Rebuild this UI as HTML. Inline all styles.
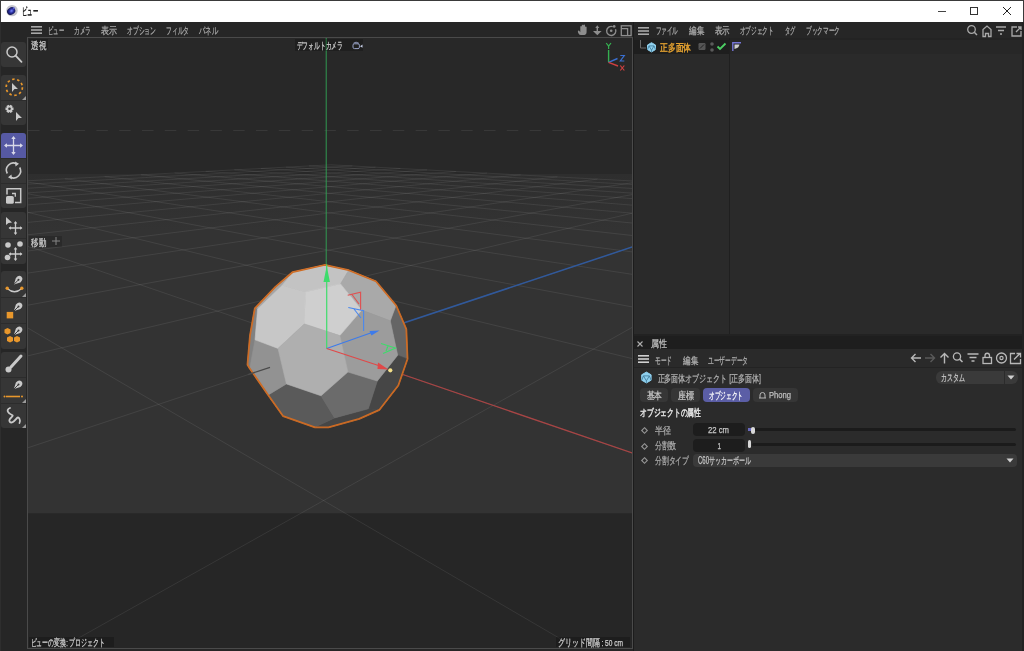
<!DOCTYPE html>
<html><head><meta charset="utf-8">
<style>
*{box-sizing:border-box}
html,body{margin:0;padding:0}
body{width:1024px;height:651px;overflow:hidden;position:relative;background:#262626;font-family:"Liberation Sans", sans-serif;color:#c8c8c8;font-size:11px}
.a{position:absolute}
svg{position:absolute;overflow:visible}
</style></head><body>

<div class="a" style="left:0px;top:0px;width:1024px;height:22px;background:#ffffff;border-top:1px solid #3a3a3a;border-left:1px solid #3a3a3a;border-right:1px solid #3a3a3a"></div>
<svg style="left:5px;top:4px" width="14" height="14" viewBox="0 0 14 14">
<defs><radialGradient id="lg" cx="0.55" cy="0.5" r="0.6"><stop offset="0" stop-color="#7a88ff"/><stop offset="0.45" stop-color="#2a30a0"/><stop offset="1" stop-color="#0c0e38"/></radialGradient></defs>
<circle cx="7" cy="6.6" r="5.7" fill="#c4c4cc"/><ellipse cx="6.2" cy="7.1" rx="4.3" ry="3.5" transform="rotate(-35 6.2 7.1)" fill="url(#lg)"/><circle cx="8.8" cy="4.3" r="1" fill="#5a60d0"/></svg>
<div class="a" style="left:938px;top:11px;width:8px;height:1px;background:#444;"></div>
<div class="a" style="left:970px;top:7px;width:8px;height:8px;background:transparent;border:1px solid #333"></div>
<svg style="left:1001px;top:5px" width="12" height="12" viewBox="0 0 12 12"><path d="M2 2L10 10M10 2L2 10" stroke="#222" stroke-width="1"/></svg>
<div class="a" style="left:0px;top:22px;width:1px;height:629px;background:#2e2e2e;"></div>
<div class="a" style="left:1px;top:22px;width:26px;height:629px;background:#262626;"></div>
<div class="a" style="left:1px;top:42px;width:25px;height:25px;background:#363636;border-radius:3px"></div>
<div class="a" style="left:1px;top:75px;width:25px;height:50px;background:#363636;border-radius:3px"></div>
<div class="a" style="left:1px;top:100px;width:25px;height:1px;background:#2c2c2c;"></div>
<div class="a" style="left:1px;top:133px;width:25px;height:75px;background:#363636;border-radius:3px"></div>
<div class="a" style="left:1px;top:158px;width:25px;height:1px;background:#2c2c2c;"></div>
<div class="a" style="left:1px;top:183px;width:25px;height:1px;background:#2c2c2c;"></div>
<div class="a" style="left:1px;top:212px;width:25px;height:52px;background:#363636;border-radius:3px"></div>
<div class="a" style="left:1px;top:238px;width:25px;height:1px;background:#2c2c2c;"></div>
<div class="a" style="left:1px;top:271px;width:25px;height:78px;background:#363636;border-radius:3px"></div>
<div class="a" style="left:1px;top:297px;width:25px;height:1px;background:#2c2c2c;"></div>
<div class="a" style="left:1px;top:323px;width:25px;height:1px;background:#2c2c2c;"></div>
<div class="a" style="left:1px;top:352px;width:25px;height:76px;background:#363636;border-radius:3px"></div>
<div class="a" style="left:1px;top:377px;width:25px;height:1px;background:#2c2c2c;"></div>
<div class="a" style="left:1px;top:403px;width:25px;height:1px;background:#2c2c2c;"></div>
<div class="a" style="left:1px;top:133px;width:25px;height:25px;background:#5659a3;border-radius:3px 3px 0 0"></div>

<svg style="left:1px;top:42px" width="25" height="25"><circle cx="11" cy="10" r="5" fill="none" stroke="#c9c9c9" stroke-width="1.5"/><path d="M14.6 13.6L20.5 19.8" stroke="#c9c9c9" stroke-width="1.8" stroke-linecap="round"/></svg>
<svg style="left:1px;top:75px" width="25" height="25"><circle cx="13.3" cy="12.3" r="8.1" fill="none" stroke="#e8972c" stroke-width="1.7" stroke-dasharray="2.5 2.6"/><path d="M11 8L17 14L13.5 14L11 17Z" fill="#c9c9c9"/><path d="M25 21L25 25L21 25Z" fill="#9a9a9a"/></svg>
<svg style="left:1px;top:100px" width="25" height="25"><path d="M12.51 7.56L12.51 10.04L10.97 10.32L11.05 10.18L11.58 11.65L9.43 12.90L8.42 11.70L8.58 11.70L7.57 12.90L5.42 11.65L5.95 10.18L6.03 10.32L4.49 10.04L4.49 7.56L6.03 7.28L5.95 7.42L5.42 5.95L7.57 4.70L8.58 5.90L8.42 5.90L9.43 4.70L11.58 5.95L11.05 7.42L10.97 7.28Z" fill="#c9c9c9"/><circle cx="8.5" cy="8.8" r="1.3" fill="#363636"/><path d="M15 12L21 18L17.5 18L15 21Z" fill="#c9c9c9"/></svg>
<svg style="left:1px;top:133px" width="25" height="25"><path d="M12.5 4V21M4 12.5H21" stroke="#d8d8e8" stroke-width="1.3"/><path d="M12.5 3L10.3 6H14.7ZM12.5 22L10.3 19H14.7ZM3 12.5L6 10.3V14.7ZM22 12.5L19 10.3V14.7Z" fill="#d8d8e8"/></svg>
<svg style="left:1px;top:158px" width="25" height="25"><path d="M6.3 15.5A7 7 0 0 1 15.5 5.8" fill="none" stroke="#c9c9c9" stroke-width="1.6"/><path d="M18.7 9.5A7 7 0 0 1 9.5 19.2" fill="none" stroke="#c9c9c9" stroke-width="1.6"/><path d="M14 3.5L18 5.8L14.5 8.5Z M11 21.5L7 19.2L10.5 16.5Z" fill="#c9c9c9"/></svg>
<svg style="left:1px;top:183px" width="25" height="25"><path d="M6 11.5V5.8H19.7V19.5H14" fill="none" stroke="#c9c9c9" stroke-width="1.5"/><rect x="5" y="13" width="7.8" height="7.8" rx="1.6" fill="#c9c9c9"/><path d="M11 10.5H14.3V13.8" fill="none" stroke="#c9c9c9" stroke-width="1.3"/></svg>
<svg style="left:1px;top:212px" width="25" height="26"><path d="M5 5L11 10.5L7.5 11L5 13Z" fill="#c9c9c9"/><path d="M14.5 10V22M8.5 16H20.5" stroke="#c9c9c9" stroke-width="1.3"/><path d="M14.5 9L12.7 11.5H16.3ZM14.5 23L12.7 20.5H16.3ZM7.5 16L10 14.2V17.8ZM21.5 16L19 14.2V17.8Z" fill="#c9c9c9"/></svg>
<svg style="left:1px;top:238px" width="25" height="26"><circle cx="7" cy="7" r="2.8" fill="#c9c9c9"/><circle cx="19" cy="6" r="2.8" fill="#c9c9c9"/><circle cx="6.5" cy="19.5" r="2.8" fill="#c9c9c9"/><path d="M14.5 10V22M8.5 16H20.5" stroke="#c9c9c9" stroke-width="1.3"/><path d="M14.5 9L12.7 11.5H16.3ZM14.5 23L12.7 20.5H16.3ZM7.5 16L10 14.2V17.8ZM21.5 16L19 14.2V17.8Z" fill="#c9c9c9"/></svg>
<svg style="left:1px;top:271px" width="25" height="26"><path d="M6.2 17.5Q13.5 24 20.8 17.5" fill="none" stroke="#c9c9c9" stroke-width="1.3"/><circle cx="6.2" cy="17.2" r="1.7" fill="#e8972c"/><circle cx="20.8" cy="17.2" r="1.7" fill="#e8972c"/><g transform="translate(17.5 8.8) rotate(45) scale(1.0)"><path d="M0 6.5L-3.2 0.5Q-3.4 -4.2 0 -4.2Q3.4 -4.2 3.2 0.5Z" fill="#c9c9c9"/><path d="M0 6.5V0.5" stroke="#363636" stroke-width="0.9"/><circle cx="0" cy="0" r="1" fill="#363636"/></g><path d="M25 22L25 26L21 26Z" fill="#9a9a9a"/></svg>
<svg style="left:1px;top:297px" width="25" height="26"><rect x="5.7" y="14.9" width="6.5" height="6.5" fill="#e8972c"/><g transform="translate(17.5 9.5) rotate(45) scale(1.0)"><path d="M0 6.5L-3.2 0.5Q-3.4 -4.2 0 -4.2Q3.4 -4.2 3.2 0.5Z" fill="#c9c9c9"/><path d="M0 6.5V0.5" stroke="#363636" stroke-width="0.9"/><circle cx="0" cy="0" r="1" fill="#363636"/></g></svg>
<svg style="left:1px;top:323px" width="25" height="26"><path d="M3.5 6.5L6.5 5L9.5 6.5V10L6.5 11.5L3.5 10Z" fill="#e8972c"/><path d="M6 14.5L9 13L12 14.5V18L9 19.5L6 18Z" fill="#e8972c"/><path d="M13 14.5L16 13L19 14.5V18L16 19.5L13 18Z" fill="#e8972c"/><g transform="translate(17.5 7.5) rotate(45) scale(1.0)"><path d="M0 6.5L-3.2 0.5Q-3.4 -4.2 0 -4.2Q3.4 -4.2 3.2 0.5Z" fill="#c9c9c9"/><path d="M0 6.5V0.5" stroke="#363636" stroke-width="0.9"/><circle cx="0" cy="0" r="1" fill="#363636"/></g></svg>
<svg style="left:1px;top:352px" width="25" height="25"><path d="M20 4L10 15" stroke="#c9c9c9" stroke-width="3" stroke-linecap="round"/><circle cx="7.5" cy="17.5" r="3" fill="#c9c9c9"/></svg>
<svg style="left:1px;top:377px" width="25" height="26"><g transform="translate(17.5 7.5) rotate(45) scale(1.0)"><path d="M0 6.5L-3.2 0.5Q-3.4 -4.2 0 -4.2Q3.4 -4.2 3.2 0.5Z" fill="#c9c9c9"/><path d="M0 6.5V0.5" stroke="#363636" stroke-width="0.9"/><circle cx="0" cy="0" r="1" fill="#363636"/></g><path d="M5 19.5H19" stroke="#e8972c" stroke-width="1.6"/><circle cx="3.5" cy="19.5" r="1" fill="#e8972c"/><circle cx="21" cy="19.5" r="1" fill="#e8972c"/><path d="M25 22L25 26L21 26Z" fill="#9a9a9a"/></svg>
<svg style="left:1px;top:403px" width="25" height="25"><path d="M9 5C4 7 8 11 11 12C14 13 6 16 9 19C11 21 14 17 16 15C18 13 20 18 18.5 20" fill="none" stroke="#c9c9c9" stroke-width="1.8" stroke-linecap="round"/><path d="M25 21L25 25L21 25Z" fill="#9a9a9a"/></svg>

<div class="a" style="left:27px;top:22px;width:606px;height:16px;background:#262626;"></div>
<svg style="left:31px;top:26px" width="11" height="8"><rect x="0" y="0" width="11" height="1.6" fill="#a8a8a8"/><rect x="0" y="3.2" width="11" height="1.6" fill="#a8a8a8"/><rect x="0" y="6.4" width="11" height="1.6" fill="#a8a8a8"/></svg>
<svg style="left:574px;top:22px" width="60" height="16">
<path d="M5.5 12.8C4.3 11.5 3.6 10 4 8.8L5 8.5L6.3 10.2V5Q6.3 4 7.1 4Q7.8 4 7.8 5V8V3.6Q7.8 2.8 8.6 2.8Q9.4 2.8 9.4 3.6V8V3.4Q9.4 2.6 10.2 2.6Q11 2.6 11 3.4V8.3V5.2Q11 4.4 11.8 4.4Q12.6 4.4 12.6 5.2V9.6Q12.6 12.8 10.5 13H7Z" fill="#8e8e8e"/>
<path d="M23.3 3.2L21.3 6H25.3Z" fill="#8e8e8e"/><rect x="22.6" y="5.5" width="1.4" height="4" fill="#8e8e8e"/><path d="M19 9H27.6L23.3 13.3Z" fill="#8e8e8e"/>
<path d="M38.7 4.6A4.6 4.6 0 1 0 41.5 7.2" fill="none" stroke="#8e8e8e" stroke-width="1.4"/><circle cx="37.2" cy="8.8" r="1.3" fill="#8e8e8e"/><circle cx="40.2" cy="4.4" r="1.3" fill="#8e8e8e"/>
<rect x="47.3" y="3.8" width="9.8" height="9.8" fill="none" stroke="#8e8e8e" stroke-width="1.3"/><path d="M47.3 6.6H53.6V13.6" fill="none" stroke="#8e8e8e" stroke-width="1.3"/>
</svg>
<div class="a" style="left:27px;top:37px;width:606px;height:612px;background:#262626;border:1px solid #4a4a4a"></div>
<svg style="left:28px;top:38px" width="604" height="610" viewBox="0 0 604 610">
<defs><linearGradient id="fg" gradientUnits="userSpaceOnUse" x1="0" y1="136" x2="0" y2="192"><stop offset="0" stop-color="#2e2e2e"/><stop offset="1" stop-color="#333333"/></linearGradient><clipPath id="vc"><rect x="0" y="0" width="604" height="610"/></clipPath></defs>
<g clip-path="url(#vc)">
<rect x="0" y="0" width="604" height="136" fill="#282828"/>
<line x1="0" y1="92.5" x2="604" y2="92.5" stroke="#383838" stroke-width="1" stroke-dasharray="11.5 11.3"/>
<rect x="0" y="136" width="604" height="339.20000000000005" fill="url(#fg)"/>
<g stroke="#ffffff" stroke-opacity="0.078" stroke-width="1" fill="none"><path d="M-3028.2,302.4L302.7,126.8"/><path d="M-3028.2,302.4L-226662.9,17770.6"/><path d="M-3697.0,354.6L324.3,127.9"/><path d="M-2374.5,267.9L-205277.6,17770.6"/><path d="M-4808.5,441.4L347.5,129.2"/><path d="M-1905.1,243.2L-183892.3,17770.6"/><path d="M-7020.1,614.2L372.3,130.5"/><path d="M-1551.8,224.5L-162507.1,17770.6"/><path d="M-13564.5,1125.4L399.0,131.9"/><path d="M-1276.1,210.0L-141121.8,17770.6"/><path d="M-225821.7,17770.6L427.8,133.5"/><path d="M-1055.0,198.3L-119736.5,17770.6"/><path d="M-204124.8,17770.6L458.9,135.1"/><path d="M-873.8,188.8L-98351.3,17770.6"/><path d="M-182427.9,17770.6L492.6,136.9"/><path d="M-722.6,180.8L-76966.0,17770.6"/><path d="M-160731.1,17770.6L529.4,138.9"/><path d="M-594.4,174.1L-55580.7,17770.6"/><path d="M-139034.2,17770.6L569.5,141.1"/><path d="M-484.5,168.3L-34195.4,17770.6"/><path d="M-117337.3,17770.6L613.5,143.4"/><path d="M-389.1,163.2L-12810.2,17770.6"/><path d="M-95640.4,17770.6L662.0,146.0"/><path d="M-305.6,158.8L8575.1,17770.6"/><path d="M-73943.5,17770.6L715.6,148.9"/><path d="M-231.8,154.9L29960.4,17770.6"/><path d="M-52246.7,17770.6L775.4,152.1"/><path d="M-166.2,151.5L51345.6,17770.6"/><path d="M-30549.8,17770.6L842.4,155.7"/><path d="M-107.5,148.4L72730.9,17770.6"/><path d="M-8852.9,17770.6L917.9,159.7"/><path d="M-54.6,145.6L94116.2,17770.6"/><path d="M12844.0,17770.6L1003.7,164.3"/><path d="M-6.7,143.1L115501.5,17770.6"/><path d="M34540.8,17770.6L1102.1,169.6"/><path d="M36.8,140.8L136886.7,17770.6"/><path d="M56237.7,17770.6L1216.0,175.7"/><path d="M76.6,138.7L158272.0,17770.6"/><path d="M77934.6,17770.6L1349.5,182.9"/><path d="M113.1,136.8L179657.3,17770.6"/><path d="M99631.5,17770.6L1508.1,191.4"/><path d="M146.6,135.0L201042.5,17770.6"/><path d="M121328.4,17770.6L1699.6,201.7"/><path d="M177.6,133.3L222427.8,17770.6"/><path d="M143025.2,17770.6L1935.3,214.3"/><path d="M206.3,131.8L20322.9,1588.4"/><path d="M164722.1,17770.6L2232.8,230.2"/><path d="M233.0,130.4L9031.1,716.2"/><path d="M186419.0,17770.6L2619.7,251.0"/><path d="M257.8,129.1L6056.8,486.4"/><path d="M208115.9,17770.6L3143.6,279.1"/><path d="M281.0,127.9L4683.6,380.3"/><path d="M229812.7,17770.6L3892.9,319.3"/><path d="M302.7,126.8L3892.9,319.3"/></g>
<line x1="298.71602864111827" y1="310.4995675868295" x2="905.6409482765259" y2="108.82718808017702" stroke="#30599c" stroke-width="1.5"/>
<line x1="298.71602864111827" y1="310.4995675868295" x2="927.5739034949211" y2="525.5939000263215" stroke="#a84444" stroke-width="1.2"/>
<line x1="298.21602864111827" y1="0" x2="298.21602864111827" y2="310.4995675868295" stroke="#319a52" stroke-width="1"/>
<polygon points="219.7,326.6 222.2,297.7 227.0,270.5 247.8,248.8 264.6,234.4 296.6,227.2 320.6,232.4 347.7,243.4 368.0,267.6 378.1,291.2 379.3,320.9 370.1,347.4 351.3,371.7 331.1,380.7 300.4,389.1 287.1,389.1 255.2,377.9 240.3,356.9 221.8,330.2" fill="#888" stroke="#cf6c24" stroke-width="2.2" stroke-linejoin="round"/>
<polygon points="229.6,271.0 227.0,270.5 247.8,248.8 264.6,234.4 254.0,247.6" fill="rgb(165,165,165)" stroke="rgb(165,165,165)" stroke-width="0.6" stroke-linejoin="round"/><polygon points="222.2,297.7 227.0,270.5 229.6,271.0 227.0,301.8 221.8,330.2 219.7,326.6" fill="rgb(129,129,129)" stroke="rgb(129,129,129)" stroke-width="0.6" stroke-linejoin="round"/><polygon points="300.4,389.1 287.1,389.1 306.6,379.9 340.3,370.8 351.3,371.7 331.1,380.7" fill="rgb(70,70,70)" stroke="rgb(70,70,70)" stroke-width="0.6" stroke-linejoin="round"/><polygon points="362.3,282.8 368.0,267.6 378.1,291.2 379.3,320.9 369.7,317.3" fill="rgb(101,101,101)" stroke="rgb(101,101,101)" stroke-width="0.6" stroke-linejoin="round"/><polygon points="340.3,370.8 349.3,343.0 369.7,317.3 379.3,320.9 370.1,347.4 351.3,371.7" fill="rgb(70,70,70)" stroke="rgb(70,70,70)" stroke-width="0.6" stroke-linejoin="round"/><polygon points="277.7,253.9 254.0,247.6 264.6,234.4 296.6,227.2 320.6,232.4 312.5,245.9" fill="rgb(195,195,195)" stroke="rgb(195,195,195)" stroke-width="0.6" stroke-linejoin="round"/><polygon points="333.7,272.1 312.5,245.9 320.6,232.4 347.7,243.4 368.0,267.6 362.3,282.8" fill="rgb(169,169,169)" stroke="rgb(169,169,169)" stroke-width="0.6" stroke-linejoin="round"/><polygon points="255.2,377.9 240.3,356.9 258.4,345.9 293.0,357.8 306.6,379.9 287.1,389.1" fill="rgb(90,90,90)" stroke="rgb(90,90,90)" stroke-width="0.6" stroke-linejoin="round"/><polygon points="221.8,330.2 227.0,301.8 250.0,310.4 258.4,345.9 240.3,356.9" fill="rgb(146,146,146)" stroke="rgb(146,146,146)" stroke-width="0.6" stroke-linejoin="round"/><polygon points="227.0,301.8 229.6,271.0 254.0,247.6 277.7,253.9 276.3,285.9 250.0,310.4" fill="rgb(199,199,199)" stroke="rgb(199,199,199)" stroke-width="0.6" stroke-linejoin="round"/><polygon points="293.0,357.8 319.9,334.0 349.3,343.0 340.3,370.8 306.6,379.9" fill="rgb(107,107,107)" stroke="rgb(107,107,107)" stroke-width="0.6" stroke-linejoin="round"/><polygon points="319.9,334.0 311.8,297.6 333.7,272.1 362.3,282.8 369.7,317.3 349.3,343.0" fill="rgb(156,156,156)" stroke="rgb(156,156,156)" stroke-width="0.6" stroke-linejoin="round"/><polygon points="276.3,285.9 277.7,253.9 312.5,245.9 333.7,272.1 311.8,297.6" fill="rgb(207,207,207)" stroke="rgb(207,207,207)" stroke-width="0.6" stroke-linejoin="round"/><polygon points="258.4,345.9 250.0,310.4 276.3,285.9 311.8,297.6 319.9,334.0 293.0,357.8" fill="rgb(175,175,175)" stroke="rgb(175,175,175)" stroke-width="0.6" stroke-linejoin="round"/>
<polygon points="219.7,326.6 222.2,297.7 227.0,270.5 247.8,248.8 264.6,234.4 296.6,227.2 320.6,232.4 347.7,243.4 368.0,267.6 378.1,291.2 379.3,320.9 370.1,347.4 351.3,371.7 331.1,380.7 300.4,389.1 287.1,389.1 255.2,377.9 240.3,356.9 221.8,330.2" fill="none" stroke="#cf6c24" stroke-width="1.3" stroke-linejoin="round"/>
<line x1="242.0004214438532" y1="329.34534420366066" x2="219.8467873762543" y2="336.7066766396664" stroke="#4a4a4a" stroke-width="1.3"/>
<!-- gizmo -->
<line x1="298.71602864111827" y1="310.4995675868295" x2="298.71602864111827" y2="226.5" stroke="#3ddc6b" stroke-width="1.2"/>
<path d="M298.71602864111827 228L295.5160286411183 244L301.91602864111826 244Z" fill="#3ddc6b"/>
<line x1="298.71602864111827" y1="310.4995675868295" x2="344" y2="294.5" stroke="#3d7bea" stroke-width="1.2"/>
<path d="M351.5 292.5L341.5 293L343.5 297.5Z" fill="#3d7bea"/>
<line x1="298.71602864111827" y1="310.4995675868295" x2="352" y2="328" stroke="#e04848" stroke-width="1.2"/>
<path d="M360.5 331.5L350 324.5L349.5 331Z" fill="#e04848"/>
<circle cx="362.3" cy="332.3" r="2.1" fill="#f4e08a"/>
<path d="M353 305.5L367.5 310L355 315.5M360 308L358 313" fill="none" stroke="#3ddc6b" stroke-width="1.1"/>
<path d="M319.7 257.2L332.6 254.10000000000002L332.6 272M324 256.5L331 266" fill="none" stroke="#e05050" stroke-width="1.1"/>
<path d="M320.3 269.5L335.6 272.6L335.6 292.9M326 271L333 280" fill="none" stroke="#4a88ee" stroke-width="1.1"/>
</g></svg>
<svg style="left:600px;top:40px" width="32" height="34">
<line x1="8.6" y1="22.3" x2="8.6" y2="10" stroke="#35b050" stroke-width="1.4"/>
<line x1="8.6" y1="22.3" x2="17.5" y2="18.5" stroke="#3a6fd0" stroke-width="1.4"/>
<line x1="8.6" y1="22.3" x2="18" y2="26" stroke="#d04040" stroke-width="1.4"/>
<path d="M6.2 3L8.6 6.2L11 3M8.6 6.2V9" fill="none" stroke="#35b050" stroke-width="1.2"/>
<path d="M20.3 15.5H24.3L20.3 21H24.3" fill="none" stroke="#3a6fd0" stroke-width="1.2"/>
<path d="M20.3 25.5L24.3 30.5M24.3 25.5L20.3 30.5" fill="none" stroke="#d04040" stroke-width="1.2"/>
</svg>
<div class="a" style="left:29px;top:39px;width:19px;height:11px;background:rgba(0,0,0,0.22);"></div>
<div class="a" style="left:295px;top:39px;width:68px;height:12px;background:rgba(0,0,0,0.22);"></div>
<svg style="left:352px;top:41px" width="12" height="9"><path d="M2.2 2.8Q1 2.8 1 4.2V6.2Q1 7.6 2.4 7.6H6Q7.4 7.6 7.4 6.2V4.2Q7.4 2.8 6 2.8Z" fill="none" stroke="#9aa4c8" stroke-width="1"/><path d="M1.5 2.2Q4 0.2 6.8 2.2" fill="none" stroke="#9aa4c8" stroke-width="0.9"/><path d="M8 5.2L10.5 3.6V6.8Z" fill="#c8d0e8"/></svg>
<div class="a" style="left:29px;top:236px;width:33px;height:11px;background:rgba(0,0,0,0.16);"></div>
<svg style="left:51px;top:236px" width="10" height="10"><path d="M5 1V9M1 5H9" stroke="#858585" stroke-width="1"/></svg>
<div class="a" style="left:29px;top:637px;width:85px;height:10px;background:rgba(0,0,0,0.22);"></div>
<div class="a" style="left:556px;top:637px;width:74px;height:10px;background:rgba(0,0,0,0.22);"></div>
<div class="a" style="left:633px;top:22px;width:1px;height:629px;background:#1c1c1c;"></div>
<div class="a" style="left:634px;top:22px;width:389px;height:16px;background:#262626;"></div>
<svg style="left:638px;top:27px" width="11" height="8"><rect x="0" y="0" width="11" height="1.6" fill="#a8a8a8"/><rect x="0" y="3.2" width="11" height="1.6" fill="#a8a8a8"/><rect x="0" y="6.4" width="11" height="1.6" fill="#a8a8a8"/></svg>
<svg style="left:966px;top:24px" width="57" height="14">
<circle cx="5.5" cy="5.5" r="3.8" fill="none" stroke="#a8a8a8" stroke-width="1.3"/><path d="M8.3 8.3L11 11" stroke="#a8a8a8" stroke-width="1.5"/>
<path d="M17 12.5V5.5L21 2L25 5.5V12.5H22.5V9.5H19.5V12.5Z" fill="none" stroke="#a8a8a8" stroke-width="1.3"/>
<path d="M30 3H40M32 6.5H38M34 10H36" stroke="#a8a8a8" stroke-width="1.5"/>
<path d="M51 3H46V12H55V7M50 8L55 3M52 3H55V6" fill="none" stroke="#a8a8a8" stroke-width="1.3"/>
</svg>
<div class="a" style="left:634px;top:38px;width:389px;height:298px;background:#2a2a2a;"></div>
<div class="a" style="left:634px;top:38px;width:389px;height:2px;background:#232323;"></div>
<div class="a" style="left:634px;top:40px;width:95px;height:14px;background:#1e1e1e;"></div>
<div class="a" style="left:730px;top:40px;width:293px;height:14px;background:#272727;"></div>
<div class="a" style="left:729px;top:38px;width:1px;height:298px;background:#1f1f1f;"></div>
<svg style="left:638px;top:38px" width="110" height="16">
<path d="M2.5 2V10H8" fill="none" stroke="#6a6a6a" stroke-width="1"/>
<path d="M13.5 4.700000000000001L17.50 7.00L17.50 11.60L13.5 13.9L9.50 11.60L9.50 7.00Z" fill="#8fd0ee" stroke="#8fd0ee" stroke-width="1" stroke-linejoin="round"/><path d="M10.97 7.92L16.03 7.92L13.5 12.15Z M10.97 7.92L9.50 11.60 M16.03 7.92L17.50 11.60 M13.5 12.15L13.5 13.9" fill="none" stroke="#3b7696" stroke-width="0.8"/>
<rect x="60.5" y="5" width="7" height="7" rx="1.2" fill="#555"/><path d="M62 10.5L66 6.5" stroke="#222" stroke-width="1"/>
<circle cx="74" cy="6" r="1.8" fill="#5a5a5a"/><circle cx="74" cy="12" r="1.8" fill="#5a5a5a"/>
<path d="M79.5 8.5L82 11L87.5 5.5" fill="none" stroke="#4ccf64" stroke-width="1.8"/>
<path d="M94.8 13V4.8H103" fill="none" stroke="#7676d6" stroke-width="1.4"/><path d="M96.5 6.5H101.5Q101 10 96.5 11Z" fill="#d0d0d0"/>
</svg>
<div class="a" style="left:634px;top:334px;width:389px;height:2px;background:#222222;"></div>
<div class="a" style="left:634px;top:336px;width:389px;height:13px;background:#1e1e1e;"></div>
<svg style="left:636px;top:339px" width="9" height="9"><path d="M1.5 2.5L6.5 7.5M6.5 2.5L1.5 7.5" stroke="#b0b0b0" stroke-width="1.1"/></svg>
<div class="a" style="left:634px;top:349px;width:389px;height:19px;background:#2a2a2a;"></div>
<svg style="left:638px;top:355px" width="11" height="8"><rect x="0" y="0" width="11" height="1.6" fill="#d0d0d0"/><rect x="0" y="3.2" width="11" height="1.6" fill="#d0d0d0"/><rect x="0" y="6.4" width="11" height="1.6" fill="#d0d0d0"/></svg>
<svg style="left:908px;top:351px" width="115" height="14">
<path d="M3.5 7H13M7.5 3L3.5 7L7.5 11" fill="none" stroke="#b8b8b8" stroke-width="1.4"/>
<path d="M17 7H26.5M22.5 3L26.5 7L22.5 11" fill="none" stroke="#5a5a5a" stroke-width="1.4"/>
<path d="M36.5 12.5V2.5M32.5 6.5L36.5 2.5L40.5 6.5" fill="none" stroke="#b8b8b8" stroke-width="1.4"/>
<circle cx="49" cy="5.5" r="3.6" fill="none" stroke="#b8b8b8" stroke-width="1.3"/><path d="M51.6 8.1L54.5 11" stroke="#b8b8b8" stroke-width="1.5"/>
<path d="M59.5 3H70.5M61.5 6.5H68.5M63.5 10H66.5" stroke="#b8b8b8" stroke-width="1.5"/>
<rect x="75" y="6.5" width="8.5" height="6" fill="none" stroke="#b8b8b8" stroke-width="1.3"/><path d="M77 6.5V4.5A2.25 2.25 0 0 1 81.5 4.5V6.5" fill="none" stroke="#b8b8b8" stroke-width="1.3"/>
<circle cx="93.5" cy="7" r="5" fill="none" stroke="#b8b8b8" stroke-width="1.3"/><circle cx="93.5" cy="7" r="1.6" fill="none" stroke="#b8b8b8" stroke-width="1.2"/>
<path d="M107 2.5H102.5V12.5H112.5V8M106 8.5L112 2.5M108.5 2.5H112.5V6.5" fill="none" stroke="#b8b8b8" stroke-width="1.3"/>
</svg>
<div class="a" style="left:634px;top:368px;width:389px;height:283px;background:#2b2b2b;"></div>
<div class="a" style="left:634px;top:367px;width:389px;height:1px;background:#232323;"></div>
<svg style="left:640px;top:371px" width="13" height="13"><path d="M6.4 1.0999999999999996L11.10 3.80L11.10 9.20L6.4 11.9L1.70 9.20L1.70 3.80Z" fill="#8fd0ee" stroke="#8fd0ee" stroke-width="1" stroke-linejoin="round"/><path d="M3.43 4.88L9.37 4.88L6.4 9.85Z M3.43 4.88L1.70 9.20 M9.37 4.88L11.10 9.20 M6.4 9.85L6.4 11.9" fill="none" stroke="#3b7696" stroke-width="0.8"/></svg>
<div class="a" style="left:936px;top:371px;width:82px;height:13px;background:#3a3a3a;border-radius:6px"></div>
<div class="a" style="left:1004px;top:371px;width:1px;height:13px;background:#2b2b2b;"></div>
<svg style="left:1007px;top:375px" width="8" height="5"><path d="M0.5 0.5H7.5L4 4.5Z" fill="#d0d0d0"/></svg>
<div class="a" style="left:640px;top:388px;width:28px;height:14px;background:#363636;border-radius:4px"></div>
<div class="a" style="left:671px;top:388px;width:29px;height:14px;background:#363636;border-radius:4px"></div>
<div class="a" style="left:703px;top:388px;width:47px;height:14px;background:#5b5ea6;border-radius:4px"></div>
<div class="a" style="left:753px;top:388px;width:45px;height:14px;background:#363636;border-radius:4px"></div>
<svg style="left:758px;top:391px" width="9" height="8"><path d="M1 7H8M2 7V4A2.5 2.5 0 0 1 7 4V7" fill="none" stroke="#b8b8b8" stroke-width="1"/></svg>
<svg style="left:640px;top:426px" width="9" height="9"><path d="M4.5 1.7L7.3 4.5L4.5 7.3L1.7 4.5Z" fill="none" stroke="#959595" stroke-width="1.1"/></svg>
<svg style="left:640px;top:441.5px" width="9" height="9"><path d="M4.5 1.7L7.3 4.5L4.5 7.3L1.7 4.5Z" fill="none" stroke="#959595" stroke-width="1.1"/></svg>
<svg style="left:640px;top:456px" width="9" height="9"><path d="M4.5 1.7L7.3 4.5L4.5 7.3L1.7 4.5Z" fill="none" stroke="#959595" stroke-width="1.1"/></svg>
<div class="a" style="left:693px;top:423px;width:52px;height:13px;background:#1d1d1d;border-radius:4px"></div>
<div class="a" style="left:693px;top:439px;width:52px;height:13px;background:#1d1d1d;border-radius:4px"></div>
<div class="a" style="left:752px;top:428px;width:264px;height:3px;background:#1b1b1b;border-radius:1.5px"></div>
<div class="a" style="left:752px;top:443px;width:264px;height:3px;background:#1b1b1b;border-radius:1.5px"></div>
<div class="a" style="left:748px;top:428px;width:4px;height:3px;background:#6a6ac0;"></div>
<div class="a" style="left:751px;top:427px;width:4px;height:7px;background:#d8d8d8;border-radius:2px"></div>
<div class="a" style="left:748px;top:440px;width:3px;height:8px;background:#d8d8d8;border-radius:1.5px"></div>
<div class="a" style="left:693px;top:454px;width:324px;height:13px;background:#3a3a3a;border-radius:4px"></div>
<svg style="left:1006px;top:458px" width="8" height="5"><path d="M0.5 0.5H7.5L4 4.5Z" fill="#d0d0d0"/></svg>
<div class="a" style="left:1022px;top:22px;width:2px;height:629px;background:#222222;"></div>
<svg style="left:0;top:0;will-change:transform" width="1024" height="651" font-family='"Liberation Sans", sans-serif'><text x="22.0" y="15.0" font-size="11" fill="#000" stroke="#000" stroke-width="0.35" font-weight="normal" textLength="16.0" lengthAdjust="spacingAndGlyphs">ビュー</text><text x="48.0" y="34.0" font-size="10" fill="#aaaaaa" stroke="#aaaaaa" stroke-width="0.25" font-weight="normal" textLength="16.0" lengthAdjust="spacingAndGlyphs">ビュー</text><text x="74.0" y="34.0" font-size="10" fill="#aaaaaa" stroke="#aaaaaa" stroke-width="0.25" font-weight="normal" textLength="17.0" lengthAdjust="spacingAndGlyphs">カメラ</text><text x="101.0" y="34.0" font-size="10" fill="#aaaaaa" stroke="#aaaaaa" stroke-width="0.25" font-weight="normal" textLength="16.0" lengthAdjust="spacingAndGlyphs">表示</text><text x="127.0" y="34.0" font-size="10" fill="#aaaaaa" stroke="#aaaaaa" stroke-width="0.25" font-weight="normal" textLength="29.0" lengthAdjust="spacingAndGlyphs">オプション</text><text x="166.0" y="34.0" font-size="10" fill="#aaaaaa" stroke="#aaaaaa" stroke-width="0.25" font-weight="normal" textLength="23.0" lengthAdjust="spacingAndGlyphs">フィルタ</text><text x="199.0" y="34.0" font-size="10" fill="#aaaaaa" stroke="#aaaaaa" stroke-width="0.25" font-weight="normal" textLength="19.0" lengthAdjust="spacingAndGlyphs">パネル</text><text x="31.0" y="49.0" font-size="9.5" fill="#d0d0d0" stroke="#d0d0d0" stroke-width="0.25" font-weight="normal" textLength="15.0" lengthAdjust="spacingAndGlyphs">透視</text><text x="296.5" y="49.0" font-size="9.5" fill="#d0d0d0" stroke="#d0d0d0" stroke-width="0.25" font-weight="normal" textLength="46.5" lengthAdjust="spacingAndGlyphs">デフォルトカメラ</text><text x="31.0" y="246.0" font-size="9.5" fill="#d0d0d0" stroke="#d0d0d0" stroke-width="0.25" font-weight="normal" textLength="15.0" lengthAdjust="spacingAndGlyphs">移動</text><text x="30.5" y="646.0" font-size="9.5" fill="#d0d0d0" stroke="#d0d0d0" stroke-width="0.25" font-weight="normal" textLength="74.5" lengthAdjust="spacingAndGlyphs">ビューの変換: プロジェクト</text><text x="558.0" y="646.0" font-size="9.5" fill="#d0d0d0" stroke="#d0d0d0" stroke-width="0.25" font-weight="normal" textLength="65.0" lengthAdjust="spacingAndGlyphs">グリッド間隔 : 50 cm</text><text x="655.5" y="34.0" font-size="10" fill="#aaaaaa" stroke="#aaaaaa" stroke-width="0.25" font-weight="normal" textLength="22.5" lengthAdjust="spacingAndGlyphs">ファイル</text><text x="689.0" y="34.0" font-size="10" fill="#aaaaaa" stroke="#aaaaaa" stroke-width="0.25" font-weight="normal" textLength="15.0" lengthAdjust="spacingAndGlyphs">編集</text><text x="714.5" y="34.0" font-size="10" fill="#aaaaaa" stroke="#aaaaaa" stroke-width="0.25" font-weight="normal" textLength="15.0" lengthAdjust="spacingAndGlyphs">表示</text><text x="739.5" y="34.0" font-size="10" fill="#aaaaaa" stroke="#aaaaaa" stroke-width="0.25" font-weight="normal" textLength="34.0" lengthAdjust="spacingAndGlyphs">オブジェクト</text><text x="784.5" y="34.0" font-size="10" fill="#aaaaaa" stroke="#aaaaaa" stroke-width="0.25" font-weight="normal" textLength="10.5" lengthAdjust="spacingAndGlyphs">タグ</text><text x="806.0" y="34.0" font-size="10" fill="#aaaaaa" stroke="#aaaaaa" stroke-width="0.25" font-weight="normal" textLength="34.0" lengthAdjust="spacingAndGlyphs">ブックマーク</text><text x="660.0" y="51.0" font-size="10" fill="#e2a030" stroke="#e2a030" stroke-width="0.45" font-weight="normal" textLength="31.0" lengthAdjust="spacingAndGlyphs">正多面体</text><text x="651.0" y="347.0" font-size="10" fill="#c0c0c0" stroke="#c0c0c0" stroke-width="0.25" font-weight="normal" textLength="16.0" lengthAdjust="spacingAndGlyphs">属性</text><text x="655.0" y="364.0" font-size="10" fill="#b0b0b0" stroke="#b0b0b0" stroke-width="0.25" font-weight="normal" textLength="17.0" lengthAdjust="spacingAndGlyphs">モード</text><text x="683.0" y="364.0" font-size="10" fill="#b0b0b0" stroke="#b0b0b0" stroke-width="0.25" font-weight="normal" textLength="15.0" lengthAdjust="spacingAndGlyphs">編集</text><text x="708.0" y="364.0" font-size="10" fill="#b0b0b0" stroke="#b0b0b0" stroke-width="0.25" font-weight="normal" textLength="40.0" lengthAdjust="spacingAndGlyphs">ユーザーデータ</text><text x="657.5" y="382.0" font-size="10" fill="#b0b0b0" stroke="#b0b0b0" stroke-width="0.25" font-weight="normal" textLength="103.5" lengthAdjust="spacingAndGlyphs">正多面体オブジェクト [正多面体]</text><text x="941.0" y="381.0" font-size="10" fill="#c8c8c8" stroke="#c8c8c8" stroke-width="0.25" font-weight="normal" textLength="24.0" lengthAdjust="spacingAndGlyphs">カスタム</text><text x="646.5" y="399.0" font-size="10" fill="#c8c8c8" stroke="#c8c8c8" stroke-width="0.25" font-weight="normal" textLength="15.5" lengthAdjust="spacingAndGlyphs">基本</text><text x="678.0" y="399.0" font-size="10" fill="#c8c8c8" stroke="#c8c8c8" stroke-width="0.25" font-weight="normal" textLength="16.0" lengthAdjust="spacingAndGlyphs">座標</text><text x="709.0" y="399.0" font-size="10" fill="#ffffff" stroke="#ffffff" stroke-width="0.25" font-weight="normal" textLength="34.0" lengthAdjust="spacingAndGlyphs">オブジェクト</text><text x="769.0" y="398.0" font-size="9.5" fill="#c0c0c0" stroke="#c0c0c0" stroke-width="0.25" font-weight="normal" textLength="22.0" lengthAdjust="spacingAndGlyphs">Phong</text><text x="640.0" y="415.8" font-size="10" fill="#e0e0e0" stroke="#e0e0e0" stroke-width="0.5" font-weight="normal" textLength="61.0" lengthAdjust="spacingAndGlyphs">オブジェクトの属性</text><text x="655.0" y="433.5" font-size="9.5" fill="#ababab" stroke="#ababab" stroke-width="0.25" font-weight="normal" textLength="16.0" lengthAdjust="spacingAndGlyphs">半径</text><text x="655.0" y="449.0" font-size="9.5" fill="#ababab" stroke="#ababab" stroke-width="0.25" font-weight="normal" textLength="21.0" lengthAdjust="spacingAndGlyphs">分割数</text><text x="655.0" y="464.0" font-size="9.5" fill="#ababab" stroke="#ababab" stroke-width="0.25" font-weight="normal" textLength="34.0" lengthAdjust="spacingAndGlyphs">分割タイプ</text><text x="708.0" y="433.0" font-size="9.5" fill="#c8c8c8" stroke="#c8c8c8" stroke-width="0.25" font-weight="normal" textLength="21.0" lengthAdjust="spacingAndGlyphs">22 cm</text><text x="717.5" y="448.5" font-size="9.5" fill="#c8c8c8" stroke="#c8c8c8" stroke-width="0.25" font-weight="normal" textLength="3.5" lengthAdjust="spacingAndGlyphs">1</text><text x="698.0" y="464.0" font-size="10" fill="#c8c8c8" stroke="#c8c8c8" stroke-width="0.25" font-weight="normal" textLength="53.0" lengthAdjust="spacingAndGlyphs">C60サッカーボール</text></svg>
</body></html>
